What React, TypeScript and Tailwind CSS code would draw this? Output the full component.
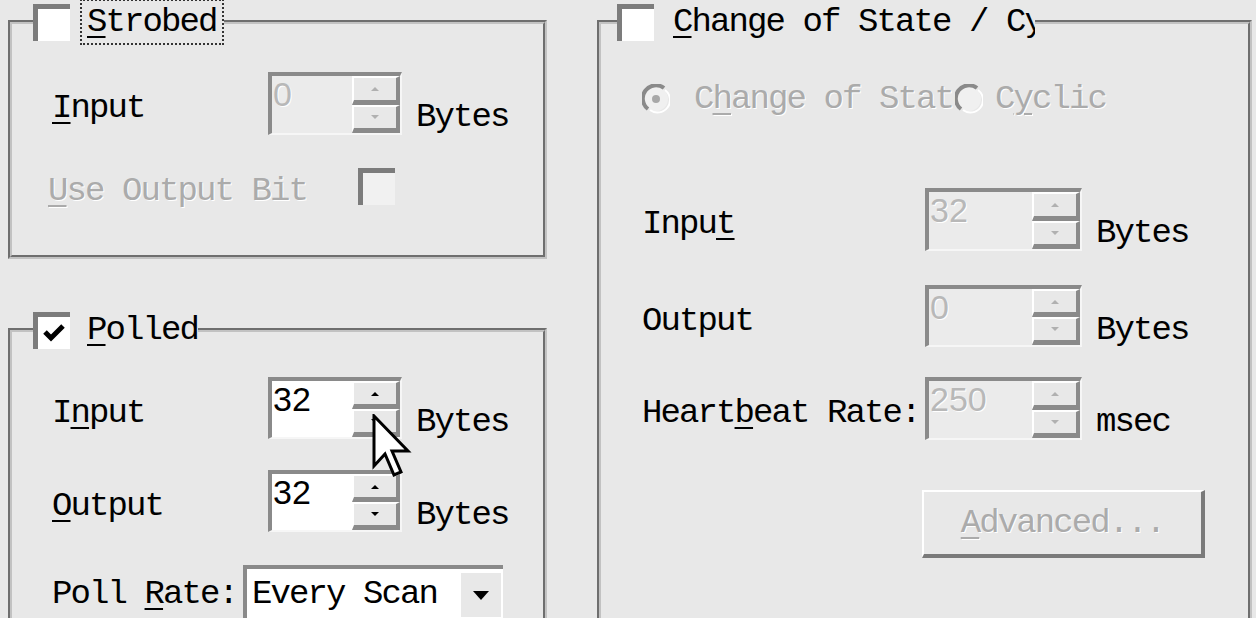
import React from 'react';

const mono =
  "font-['Liberation_Mono','DejaVu_Sans_Mono',monospace] text-[34px] leading-[38px] tracking-[-1.9px]";
const gray = 'text-[#ababab] [text-shadow:1px_1px_0_#ffffff]';

function U({ children }: { children: React.ReactNode }) {
  return <span className="underline decoration-2 underline-offset-[5px]">{children}</span>;
}

function Check({ checked, disabled }: { checked?: boolean; disabled?: boolean }) {
  return (
    <div
      className={`w-[37px] h-[37px] shrink-0 border-t-[5px] border-l-[5px] border-[#7c7c7c] flex items-center justify-center ${
        disabled ? 'bg-[#f1f1f1]' : 'bg-white'
      }`}
    >
      {checked && (
        <svg width="24" height="20" viewBox="0 0 24 20">
          <path d="M3 9 L9 15 L21 3" stroke="#000" strokeWidth="5" fill="none" />
        </svg>
      )}
    </div>
  );
}

function Radio({ dot }: { dot?: boolean }) {
  return (
    <svg width="28" height="30" viewBox="0 0 28 30" className="shrink-0">
      <circle cx="14" cy="15" r="12" fill="#f0f0f0" />
      <path d="M6 25 A12 12 0 0 1 22 4" stroke="#8a8a8a" strokeWidth="4" fill="none" />
      <path d="M23 6 A12 12 0 0 1 8 26" stroke="#ffffff" strokeWidth="2" fill="none" />
      {dot && <circle cx="14" cy="15" r="4" fill="#a8a8a8" />}
    </svg>
  );
}

function SpinBtn({ up, disabled }: { up?: boolean; disabled?: boolean }) {
  const c = disabled ? '#b0b0b0' : '#000000';
  return (
    <div className="flex-1 bg-[#e8e8e8] border-t-2 border-l-2 border-t-white border-l-white border-r-[4px] border-b-[5px] border-r-[#8a8a8a] border-b-[#8a8a8a] flex items-center justify-center">
      <svg width="8" height="5" viewBox="0 0 8 5">
        <path d={up ? 'M0 5 L4 1 L8 5 Z' : 'M0 0 L4 4 L8 0 Z'} fill={c} />
      </svg>
    </div>
  );
}

function Spin({ value, wide, disabled }: { value: string; wide?: boolean; disabled?: boolean }) {
  return (
    <div
      className={`flex h-full shrink-0 border-t-[4px] border-l-[4px] border-t-[#8a8a8a] border-l-[#8a8a8a] border-r-2 border-b-2 border-r-[#f6f6f6] border-b-[#f6f6f6] ${
        wide ? 'w-[157px]' : 'w-[134px]'
      }`}
    >
      <div
        className={`flex-1 font-['Liberation_Sans',Arial,sans-serif] text-[34px] leading-[36px] pl-[1px] tracking-normal ${
          disabled ? 'bg-[#ebebeb] text-[#b8b8b8] [text-shadow:1px_1px_0_#ffffff]' : 'bg-white text-black'
        }`}
      >
        {value}
      </div>
      <div className="w-[48px] flex flex-col">
        <SpinBtn up disabled={disabled} />
        <SpinBtn disabled={disabled} />
      </div>
    </div>
  );
}

function SpinRow({
  label,
  value,
  unit,
  wide,
  disabled,
  className,
}: {
  label: React.ReactNode;
  value: string;
  unit: string;
  wide?: boolean;
  disabled?: boolean;
  className: string;
}) {
  return (
    <div className={`flex ${className}`}>
      <div className={`pt-[17px] shrink-0 ${wide ? 'w-[283px]' : 'w-[216px]'}`}>{label}</div>
      <Spin value={value} wide={wide} disabled={disabled} />
      <div className="pt-[26px] ml-[14px]">{unit}</div>
    </div>
  );
}

function Cursor() {
  return (
    <svg
      width="40"
      height="70"
      viewBox="0 0 40 70"
      className="absolute left-[372px] top-[414px] pointer-events-none"
    >
      <path
        d="M2 2 L2 52 L13 40 L22 61 L29 58 L20 37 L36 37 Z"
        fill="#ffffff"
        stroke="#000000"
        strokeWidth="3"
        strokeLinejoin="miter"
      />
    </svg>
  );
}

const fieldset = 'border-[4px] [border-style:groove] border-[#c2c2c2] m-0 p-0 min-w-0 shrink-0';

export default function App() {
  return (
    <div className={`relative w-[1256px] h-[618px] overflow-hidden bg-[#e8e8e8] text-black flex items-start ${mono}`}>
      {/* left column */}
      <div className="ml-[8px] w-[539px] flex flex-col shrink-0">
        <fieldset className={`${fieldset} h-[259px] px-[40px]`}>
          <legend className="ml-[-19px] h-[44px] flex items-center p-0">
            <Check />
            <span className="ml-[10px] px-[5px] py-[2px] border-2 border-dotted border-[#333]">
              <U>S</U>trobed
            </span>
          </legend>
          <SpinRow className="mt-[28px] h-[63px]" label={<><U>I</U>nput</>} value="0" unit="Bytes" disabled />
          <div className="flex mt-[33px] h-[39px]">
            <div className={`pt-[4px] w-[310px] -ml-[4px] ${gray}`}>
              <U>U</U>se Output Bit
            </div>
            <Check disabled />
          </div>
        </fieldset>

        <fieldset className={`${fieldset} mt-[49px] h-[400px] px-[40px]`}>
          <legend className="ml-[-19px] h-[44px] flex items-center p-0">
            <Check checked />
            <span className="ml-[17px]">
              <U>P</U>olled
            </span>
          </legend>
          <SpinRow className="mt-[25px] h-[62px]" label={<>I<U>n</U>put</>} value="32" unit="Bytes" />
          <SpinRow className="mt-[31px] h-[62px]" label={<><U>O</U>utput</>} value="32" unit="Bytes" />
          <div className="flex mt-[33px] h-[60px]">
            <div className="pt-[10px] w-[191px] shrink-0">
              Poll <U>R</U>ate:
            </div>
            <div className="w-[272px] h-full border-t-[4px] border-l-[4px] border-[#8a8a8a] bg-white flex">
              <div className="flex-1 pl-[5px] pt-[6px]">Every Scan</div>
              <div className="w-[42px] mr-[2px] mt-[2px] h-[46px] bg-[#e8e8e8] border-t-2 border-l-2 border-white flex items-center justify-center">
                <svg width="16" height="9" viewBox="0 0 16 9">
                  <path d="M0 0 L16 0 L8 9 Z" fill="#000" />
                </svg>
              </div>
            </div>
          </div>
        </fieldset>
      </div>

      {/* right column */}
      <fieldset className={`${fieldset} ml-[50px] w-[655px] h-[700px] px-[41px]`}>
        <legend className="ml-[-25px] h-[44px] flex items-center p-0">
          <Check />
          <span className="ml-[19px] w-[362px] overflow-hidden whitespace-nowrap">
            <U>C</U>hange of State / Cyclic
          </span>
        </legend>
        <div className={`flex items-center mt-[36px] h-[38px] ${gray}`}>
          <Radio dot />
          <span className="ml-[24px] w-[261px] overflow-hidden whitespace-nowrap">
            C<U>h</U>ange of State
          </span>
          <Radio />
          <span className="ml-[12px]">
            C<U>y</U>clic
          </span>
        </div>
        <SpinRow className="mt-[70px] h-[63px]" wide label={<>Inpu<U>t</U></>} value="32" unit="Bytes" disabled />
        <SpinRow className="mt-[34px] h-[62px]" wide label="Output" value="0" unit="Bytes" disabled />
        <SpinRow className="mt-[30px] h-[63px]" wide label={<>Heart<U>b</U>eat Rate:</>} value="250" unit="msec" disabled />
        <div className="flex mt-[50px]">
          <div className="ml-[280px] w-[283px] h-[68px] bg-[#e8e8e8] border-t-2 border-l-2 border-t-white border-l-white border-r-[4px] border-b-[4px] border-r-[#7a7a7a] border-b-[#7a7a7a] flex items-center justify-center">
            <span className={gray}>
              <U>A</U>dvanced...
            </span>
          </div>
        </div>
      </fieldset>

      <Cursor />
    </div>
  );
}
